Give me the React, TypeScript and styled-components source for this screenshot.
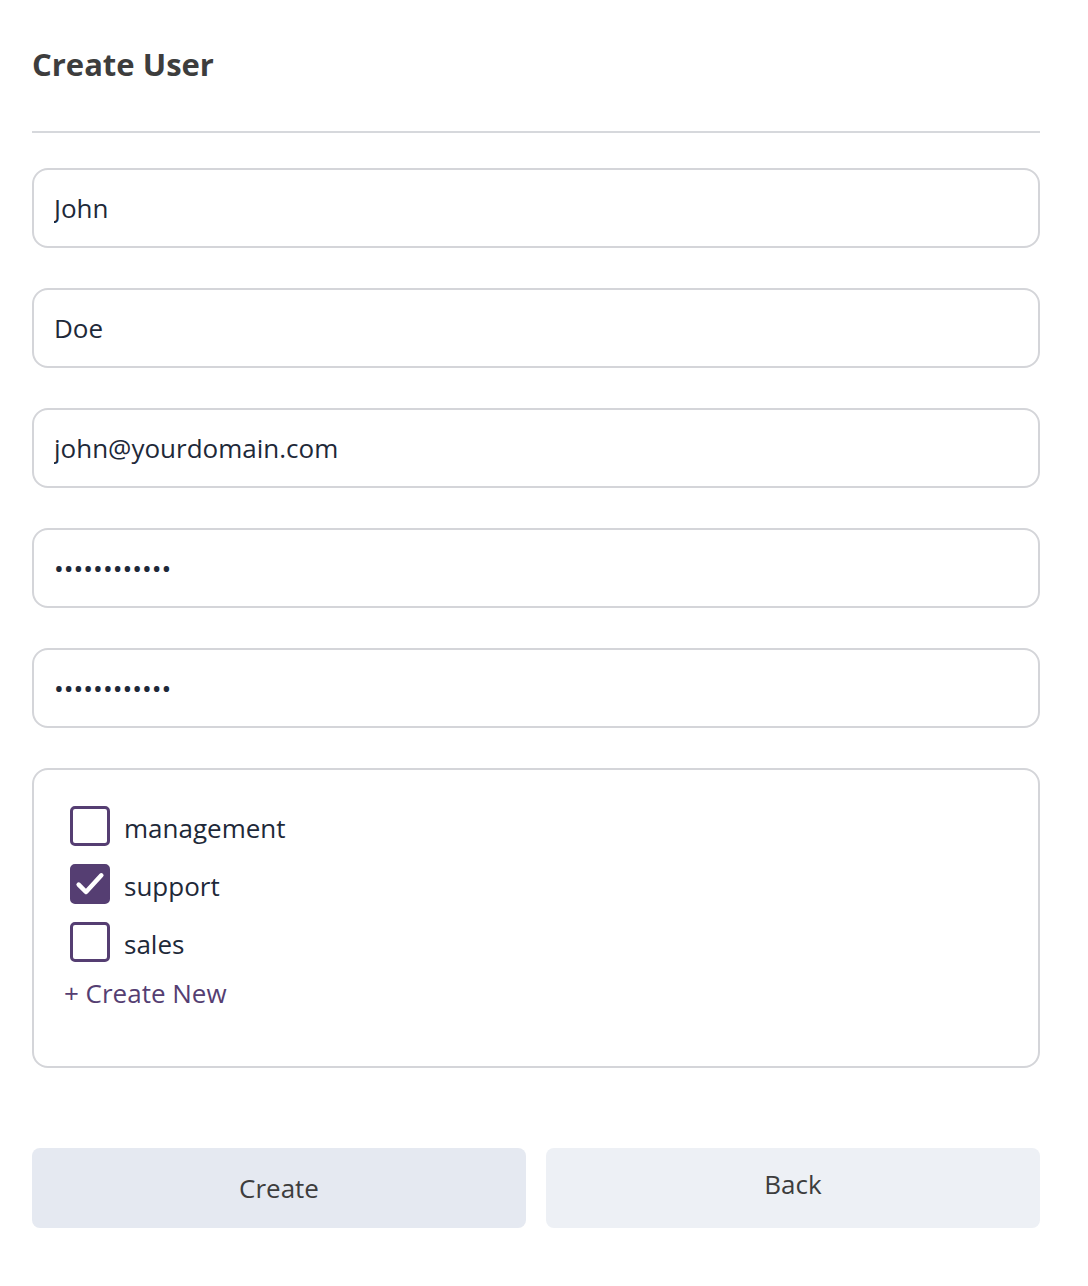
import styled, { createGlobalStyle } from 'styled-components';
import { useState } from 'react';

const GlobalStyle = createGlobalStyle`
    * {
        box-sizing: border-box;
    }
    body {
        margin: 0;
        background: #ffffff;
        font-family: 'Open Sans', 'Noto Sans', sans-serif;
    }
`;

const Page = styled.div`
    width: 1088px;
    padding: 0 48px 0 32px;
`;

const Header = styled.div`
    padding-top: 44px;
    border-bottom: 2px solid #d6d8dc;
    padding-bottom: 47px;
`;

const Title = styled.h1`
    margin: 0;
    font-size: 31px;
    line-height: 40px;
    font-weight: 700;
    color: #3d3d3d;
`;

const Form = styled.form`
    display: flex;
    flex-direction: column;
    gap: 40px;
    padding-top: 35px;
`;

const Input = styled.input`
    width: 100%;
    height: 80px;
    padding: 0 20px;
    border: 2px solid #d4d5d9;
    border-radius: 16px;
    font-family: 'Open Sans', sans-serif;
    font-size: 26px;
    color: #1e2939;
    outline: none;
`;

const GroupBox = styled.div`
    height: 300px;
    border: 2px solid #d4d5d9;
    border-radius: 16px;
    padding: 36px 30px;
    display: flex;
    flex-direction: column;
`;

const CheckRow = styled.label`
    display: flex;
    align-items: center;
    gap: 14px;
    height: 40px;
    margin-left: 6px;
    margin-bottom: 18px;
    font-size: 26px;
    color: #1e2939;
    cursor: pointer;
`;

const LabelText = styled.span`
    padding-top: 4px;
`;

const Box = styled.span<{ $checked: boolean }>`
    width: 40px;
    height: 40px;
    border: 3px solid #553e72;
    border-radius: 5px;
    background: ${(p) => (p.$checked ? '#553e72' : '#ffffff')};
    display: flex;
    align-items: center;
    justify-content: center;
    flex-shrink: 0;
`;

const CreateNew = styled.a`
    margin-top: -4px;
    font-size: 26px;
    line-height: 34px;
    color: #553e72;
    text-decoration: none;
    cursor: pointer;
`;

const Actions = styled.div`
    display: grid;
    grid-template-columns: 1fr 1fr;
    gap: 20px;
    margin-top: 40px;
`;

const Button = styled.button<{ $tone: 'primary' | 'secondary' }>`
    height: 80px;
    border: none;
    border-radius: 8px;
    background: ${(p) => (p.$tone === 'primary' ? '#e5e9f1' : '#edf0f5')};
    color: #3d3d3d;
    font-family: 'Open Sans', sans-serif;
    font-size: 26px;
    padding: ${(p) => (p.$tone === 'primary' ? '0' : '0 0 8px')};
    cursor: pointer;
`;

const groups = ['management', 'support', 'sales'];

export default function App() {
    const [checked, setChecked] = useState<string[]>(['support']);

    const toggle = (name: string) => {
        setChecked((prev) => (prev.includes(name) ? prev.filter((g) => g !== name) : [...prev, name]));
    };

    return (
        <Page>
            <GlobalStyle />
            <Header>
                <Title>Create User</Title>
            </Header>
            <Form onSubmit={(e) => e.preventDefault()}>
                <Input defaultValue="John" />
                <Input defaultValue="Doe" />
                <Input defaultValue="john@yourdomain.com" />
                <Input type="password" defaultValue="secretpasswd" />
                <Input type="password" defaultValue="secretpasswd" />
                <GroupBox>
                    {groups.map((name) => (
                        <CheckRow key={name} onClick={() => toggle(name)}>
                            <Box $checked={checked.includes(name)}>
                                {checked.includes(name) ? (
                                    <svg width="32" height="32" viewBox="0 0 24 24" fill="none">
                                        <path
                                            d="M3.5 12.5l5.5 5.5L20.5 5.5"
                                            stroke="#ffffff"
                                            strokeWidth="3.4"
                                            strokeLinecap="round"
                                            strokeLinejoin="round"
                                        />
                                    </svg>
                                ) : null}
                            </Box>
                            <LabelText>{name}</LabelText>
                        </CheckRow>
                    ))}
                    <CreateNew>+ Create New</CreateNew>
                </GroupBox>
                <Actions>
                    <Button $tone="primary" type="submit">
                        Create
                    </Button>
                    <Button $tone="secondary" type="button">
                        Back
                    </Button>
                </Actions>
            </Form>
        </Page>
    );
}
